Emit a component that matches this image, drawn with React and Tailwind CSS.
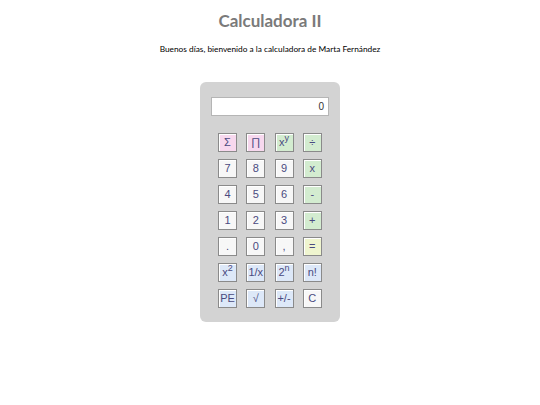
import React, { useState } from 'react';

const pink = 'bg-[#f7d8ee]';
const green = 'bg-[#d3ecd0]';
const white = 'bg-[#f7f7f7]';
const yellow = 'bg-[#eff5cf]';
const blue = 'bg-[#dde8f8]';

const rows = [
  [
    { label: 'Σ', color: pink },
    { label: '∏', color: pink },
    { label: <>x<sup className="text-[9px]">y</sup></>, color: green },
    { label: '÷', color: green },
  ],
  [
    { label: '7', color: white },
    { label: '8', color: white },
    { label: '9', color: white },
    { label: 'x', color: green },
  ],
  [
    { label: '4', color: white },
    { label: '5', color: white },
    { label: '6', color: white },
    { label: '-', color: green },
  ],
  [
    { label: '1', color: white },
    { label: '2', color: white },
    { label: '3', color: white },
    { label: '+', color: green },
  ],
  [
    { label: '.', color: white },
    { label: '0', color: white },
    { label: ',', color: white },
    { label: '=', color: yellow },
  ],
  [
    { label: <>x<sup className="text-[9px]">2</sup></>, color: blue },
    { label: '1/x', color: blue },
    { label: <>2<sup className="text-[9px]">n</sup></>, color: blue },
    { label: 'n!', color: blue },
  ],
  [
    { label: 'PE', color: blue },
    { label: '√', color: blue },
    { label: '+/-', color: blue },
    { label: 'C', color: white },
  ],
];

const App = () => {
  const [display] = useState('0');

  return (
    <div className="w-[540px] h-[405px] bg-white flex flex-col items-center font-['Lato',sans-serif]">
      <h1 className="mt-[10px] text-[17px] leading-[22px] font-bold text-[#7a7a7a]">Calculadora II</h1>
      <p className="mt-[12px] text-[8.3px] leading-[10px] text-black">
        Buenos días, bienvenido a la calculadora de Marta Fernández
      </p>

      <div className="mt-[28px] w-[140px] bg-[#d3d3d3] rounded-[6px] pt-[15px] pb-[14px] px-[11px]">
        <div className="h-[19px] bg-white border border-[#b5b5b5] flex items-center justify-end pr-[4px] text-[10px] text-[#333] font-['Liberation_Sans',sans-serif]">
          {display}
        </div>

        <div className="mt-[17px] px-[7px] grid grid-cols-4 gap-x-[9px] gap-y-[7px]">
          {rows.flat().map((b, i) => (
            <button
              key={i}
              className={`h-[19px] w-[19px] ${b.color} border border-[#8a8a8a] shadow-[inset_1px_1px_0_#fff] flex items-center justify-center text-[11px] leading-none text-[#4a4a80] font-['Liberation_Sans',sans-serif]`}
            >
              {b.label}
            </button>
          ))}
        </div>
      </div>
    </div>
  );
};

export default App;
